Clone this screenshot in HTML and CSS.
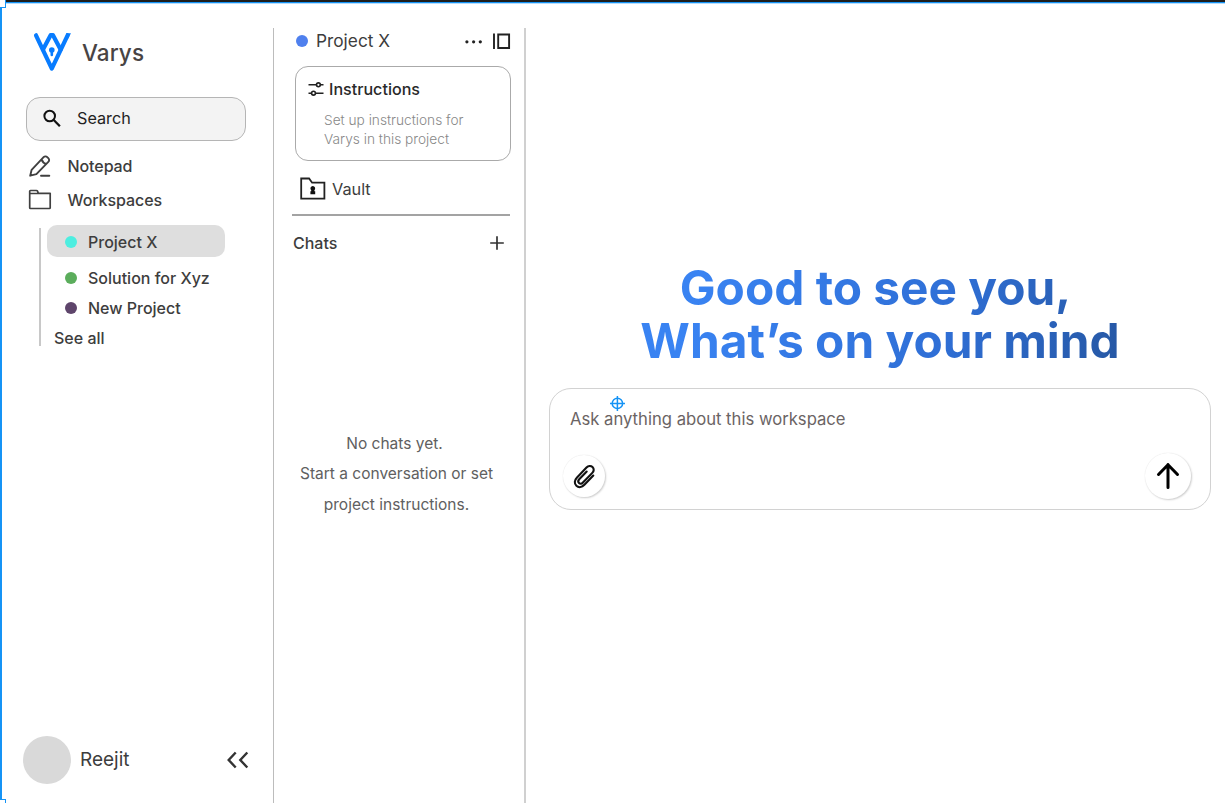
FILE: index.html
```html
<!DOCTYPE html>
<html lang="en">
<head>
<meta charset="utf-8">
<title>Varys</title>
<link rel="stylesheet" href="styles.css">
</head>
<body>
<div class="app">
  <i class="handle handle-top"></i><i class="handle handle-bottom"></i>
  <aside class="sidebar">
    <div class="brand">
      <svg class="logo" width="40" height="40" viewBox="0 0 40 40" fill="none" stroke="#087cff" stroke-width="4.2" stroke-linecap="round" stroke-linejoin="round"><path d="M3 3.3 18.8 36.6 34.6 3.3"/><path d="M10 17.6 17.6 3.2H20L27.6 17.6"/><path d="M33 1.2h5l-3 5.6Z" fill="#087cff" stroke="none"/><circle cx="18.8" cy="18" r="2.8" fill="#087cff" stroke="none"/><path d="M18.8 18v5" stroke-width="2.6"/></svg>
      <span class="brand-name">Varys</span>
    </div>
    <div class="search">
      <svg width="20" height="20" viewBox="0 0 20 20" fill="none" stroke="#111" stroke-width="2"><circle cx="6.7" cy="7" r="5.3"/><path d="m10.5 10.8 6.4 6.4" stroke-width="2.3"/></svg>
      <span class="search-text">Search</span>
    </div>
    <nav class="nav">
      <a class="nav-row notepad"><svg width="24" height="24" viewBox="0 0 24 24" fill="none" stroke="#404040" stroke-width="1.9" stroke-linecap="round" stroke-linejoin="round"><path d="M2.2 21.7 3.6 15.9 15.6 3.2a2.5 2.5 0 0 1 3.7 0l1 .9a2.6 2.6 0 0 1 0 3.8L8.4 20.2Z M13.6 5.4c.8 2.4 2.3 4 4.7 4.7M13 21.7h8.3"/></svg><span>Notepad</span></a>
      <a class="nav-row"><svg width="24" height="24" viewBox="0 0 24 24" fill="none" stroke="#404040" stroke-width="1.7" stroke-linejoin="round"><path d="M1.7 19.7V3.3q0-.8.8-.8h5.9q.8 0 1.1.7l.9 2.1h11.8v14.4q0 .8-.8.8H2.5q-.8 0-.8-.8M1.7 5.5h9"/></svg><span>Workspaces</span></a>
    </nav>
    <div class="tree">
      <a class="tree-row active"><i class="dot cyan"></i><span>Project X</span></a>
      <a class="tree-row"><i class="dot green"></i><span>Solution for Xyz</span></a>
      <a class="tree-row"><i class="dot purple"></i><span>New Project</span></a>
      <a class="see-all"><span>See all</span></a>
    </div>
    <div class="user">
      <i class="avatar"></i><span class="user-name">Reejit</span>
      <svg class="collapse" width="24" height="20" viewBox="0 0 24 20" fill="none" stroke="#333" stroke-width="2.4"><path d="M9.7 2.5 2.7 10l7 7.5M21.3 2.5l-7 7.5 7 7.5"/></svg>
    </div>
  </aside>
  <section class="project">
    <header class="project-head">
      <i class="dot blue"></i><span class="project-title">Project X</span>
      <svg class="more" width="18" height="6" viewBox="0 0 18 6" fill="#222"><circle cx="1.9" cy="3.8" r="1.6"/><circle cx="8.6" cy="3.8" r="1.6"/><circle cx="15.3" cy="3.8" r="1.6"/></svg>
      <svg class="panel" width="19" height="18" viewBox="0 0 19 18" fill="none" stroke="#222" stroke-width="1.9"><path d="M2 1.5v15.5M6.2 2.5h10.9v13.5H6.2Z"/></svg>
    </header>
    <div class="instructions">
      <div class="instructions-title"><svg width="16" height="16" viewBox="0 0 16 16" fill="none" stroke="#222" stroke-width="1.6"><path d="M.5 3.8h8M12.6 3.8h2.9M.5 12.2h3M7.5 12.2h8"/><circle cx="10.4" cy="3.8" r="1.9"/><circle cx="5.5" cy="12.2" r="1.9"/></svg><span>Instructions</span></div>
      <p class="instructions-text">Set up instructions for<br>Varys in this project</p>
    </div>
    <a class="vault"><svg width="26" height="24" viewBox="0 0 26 24" fill="none" stroke="#222" stroke-width="1.8"><path d="M1.2 21.7V1.5h7.9l3 4.2h12.3v16H1.2Z"/><path d="M12.8 9a2.5 2.5 0 0 1 1.6 4.3v.9h.8v3.1h-4.8v-3.1h.8v-.9A2.5 2.5 0 0 1 12.8 9Z" fill="#111" stroke="none"/></svg><span>Vault</span></a>
    <div class="chats-head"><span>Chats</span><svg width="16" height="16" viewBox="0 0 16 16" stroke="#333" stroke-width="1.7"><path d="M8 1.2v13.6M1.2 8h13.6"/></svg></div>
    <p class="empty"><span class="empty-lead">No chats yet.</span><br>Start a conversation or set<br>project instructions.</p>
  </section>
  <main class="main">
    <h1 class="greeting"><span class="greeting-lead">Good to see you,</span><br>What’s on your mind</h1>
    <div class="composer">
      <span class="placeholder">Ask anything about this workspace</span>
      <svg class="target" width="16" height="16" viewBox="0 0 16 16" fill="none" stroke="#1593f5" stroke-width="1.5"><circle cx="8.4" cy="8.4" r="5.2"/><path d="M8.4 1v15M1 8.4h15"/></svg>
      <div class="actions">
        <button class="round attach"><svg width="24" height="26" viewBox="0 0 24 26" fill="none" stroke="#111" stroke-width="2.1" stroke-linecap="round"><path d="m21.3 12.6-8.9 9.2c-2.4 2.5-5.7 3.1-8 1-2.3-2.2-2-5.6.4-8.1L14.5 4.6c1.8-1.9 4.3-2.2 6-.6s1.6 4-.2 5.9l-9.6 9.8c-1.1 1.2-2.7 1.3-3.7.3s-.9-2.5.2-3.7l7.5-7.8"/></svg></button>
        <button class="round send"><svg width="26" height="28" viewBox="0 0 26 28" fill="none" stroke="#000" stroke-width="3" stroke-linecap="round" stroke-linejoin="round"><path d="M13 25.5V2.5M3.5 12.5 13 2.7l9.5 9.8"/></svg></button>
      </div>
    </div>
  </main>
</div>
</body>
</html>
```
FILE: styles.css
```css
* { box-sizing: border-box; }
body { margin: 0; font-family: Inter, sans-serif; color: #3d3d3d; background: #fff; }
.app { position: relative; display: flex; height: 803px; overflow: hidden; box-shadow: inset 0 2px #1e1e1e, inset 0 3px #1593f5, inset 0 4px #b5dcfb, inset 2px 0 #1593f5; padding: 28px 0 0 2px; }
svg { display: block; flex: none; }
.handle { position: absolute; left: 0; width: 6px; height: 8px; background: #fff; border: 1px solid #1593f5; border-left: 0; }
.handle-top { top: 0; border-top: 0; }
.handle-bottom { bottom: -4px; }
.sidebar { width: 272px; flex: none; display: flex; flex-direction: column; border-right: 1px solid #bcbcbc; padding: 3px 23px 19px 20.5px; }
.brand { display: flex; align-items: center; height: 42px; padding-left: 10px; }
.brand-name { margin: 1px 0 0 9.5px; font-size: 22.5px; font-weight: 500; letter-spacing: .1px; color: #484444; }
.search { display: flex; align-items: center; width: 220px; height: 44px; margin: 24px 0 0 3.5px; padding-left: 16px; border: 1px solid #b5b5b5; border-radius: 14px; background: #f3f3f3; }
.search-text { margin: -2px 0 0 14px; font-size: 16.2px; color: #222; }
.nav { margin-top: 8px; padding-left: 5px; font-size: 16px; font-weight: 500; }
.nav-row { display: flex; align-items: center; gap: 16px; height: 34px; letter-spacing: -.08px; }
.tree { width: 186px; height: 118px; margin: 11px 0 0 16.5px; padding-left: 6px; border-left: 2px solid #c8c8c8; font-size: 16px; font-weight: 500; }
.tree-row { display: flex; align-items: center; height: 30px; padding-left: 17.5px; gap: 11.5px; }
.tree-row.active { width: 178px; height: 32px; margin: -3px 0 6px; padding-top: 1px; border-radius: 10px; background: #dedede; }
.see-all { display: flex; align-items: center; height: 29px; padding-left: 7px; }
.dot { width: 12px; height: 12px; border-radius: 50%; flex: none; }
.cyan { background: #4deee0; }
.green { background: #5bad5c; }
.purple { background: #5e456b; }
.blue { background: #4f80ee; }
.user { display: flex; align-items: center; margin-top: auto; }
.avatar { width: 48px; height: 48px; border-radius: 50%; background: #d9d9d9; }
.user-name { margin: -2px 0 0 9.5px; font-size: 19px; }
.collapse { margin-left: auto; }
.project { width: 252px; flex: none; padding: 0 14px 0 18px; border-right: 2px solid #d0d0d0; }
.project-head { display: flex; align-items: center; height: 26px; padding-left: 4px; }
.project-title { margin: -1px 0 0 8px; font-size: 17.3px; }
.more { margin-left: auto; }
.panel { margin: 0 -1px 0 9px; }
.instructions { width: 215.5px; height: 95px; margin: 12px 0 0 3px; padding: 11px 13px; border: 1px solid #aaa; border-radius: 13px; }
.instructions-title { display: flex; align-items: center; height: 22px; gap: 5px; margin-left: -1px; font-size: 16.1px; font-weight: 500; color: #292929; }
.instructions-text { margin: 11px 0 0 15px; font-size: 13.7px; line-height: 19px; font-weight: 300; color: #888; }
.vault { display: flex; align-items: center; height: 55px; padding: 3px 0 0 8px; gap: 6px; font-size: 16.3px; border-bottom: 2px solid #a3a3a3; }
.chats-head { display: flex; align-items: center; justify-content: space-between; height: 53px; padding: 0 5px 0 1px; font-size: 16px; font-weight: 500; }
.empty { margin: 160px 0 0; padding-right: 9px; text-align: center; font-size: 15.5px; line-height: 30.3px; color: #606060; white-space: nowrap; }
.empty-lead { padding-right: 4px; }
.main { flex: 1; padding: 234px 14px 0 23px; }
.greeting { margin: 0 auto; padding-bottom: 4px; width: fit-content; text-align: center; font-size: 47.8px; line-height: 53px; font-weight: 700; background: linear-gradient(105deg, #3983f2 12%, #2f6fd6 63%, #25559f 103%); background-clip: text; -webkit-background-clip: text; color: transparent; white-space: nowrap; }
.greeting-lead { padding-right: 9px; }
.composer { position: relative; width: 662px; height: 122px; margin-top: 16px; border: 1px solid #d2d2d2; border-radius: 22px; display: flex; flex-direction: column; justify-content: space-between; padding: 18px 19px 10px 13px; }
.placeholder { margin-left: 7px; font-size: 16.65px; line-height: 24px; color: #6b6464; }
.target { position: absolute; left: 59px; top: 6px; }
.actions { display: flex; justify-content: space-between; align-items: center; }
.round { display: flex; align-items: center; justify-content: center; padding: 0; border: 0; border-radius: 50%; background: #fff; box-shadow: 0 0 1px #ddd, 1px 1px 2px #ccc; }
.attach { width: 42px; height: 42px; }
.send { width: 46px; height: 46px; }
```
